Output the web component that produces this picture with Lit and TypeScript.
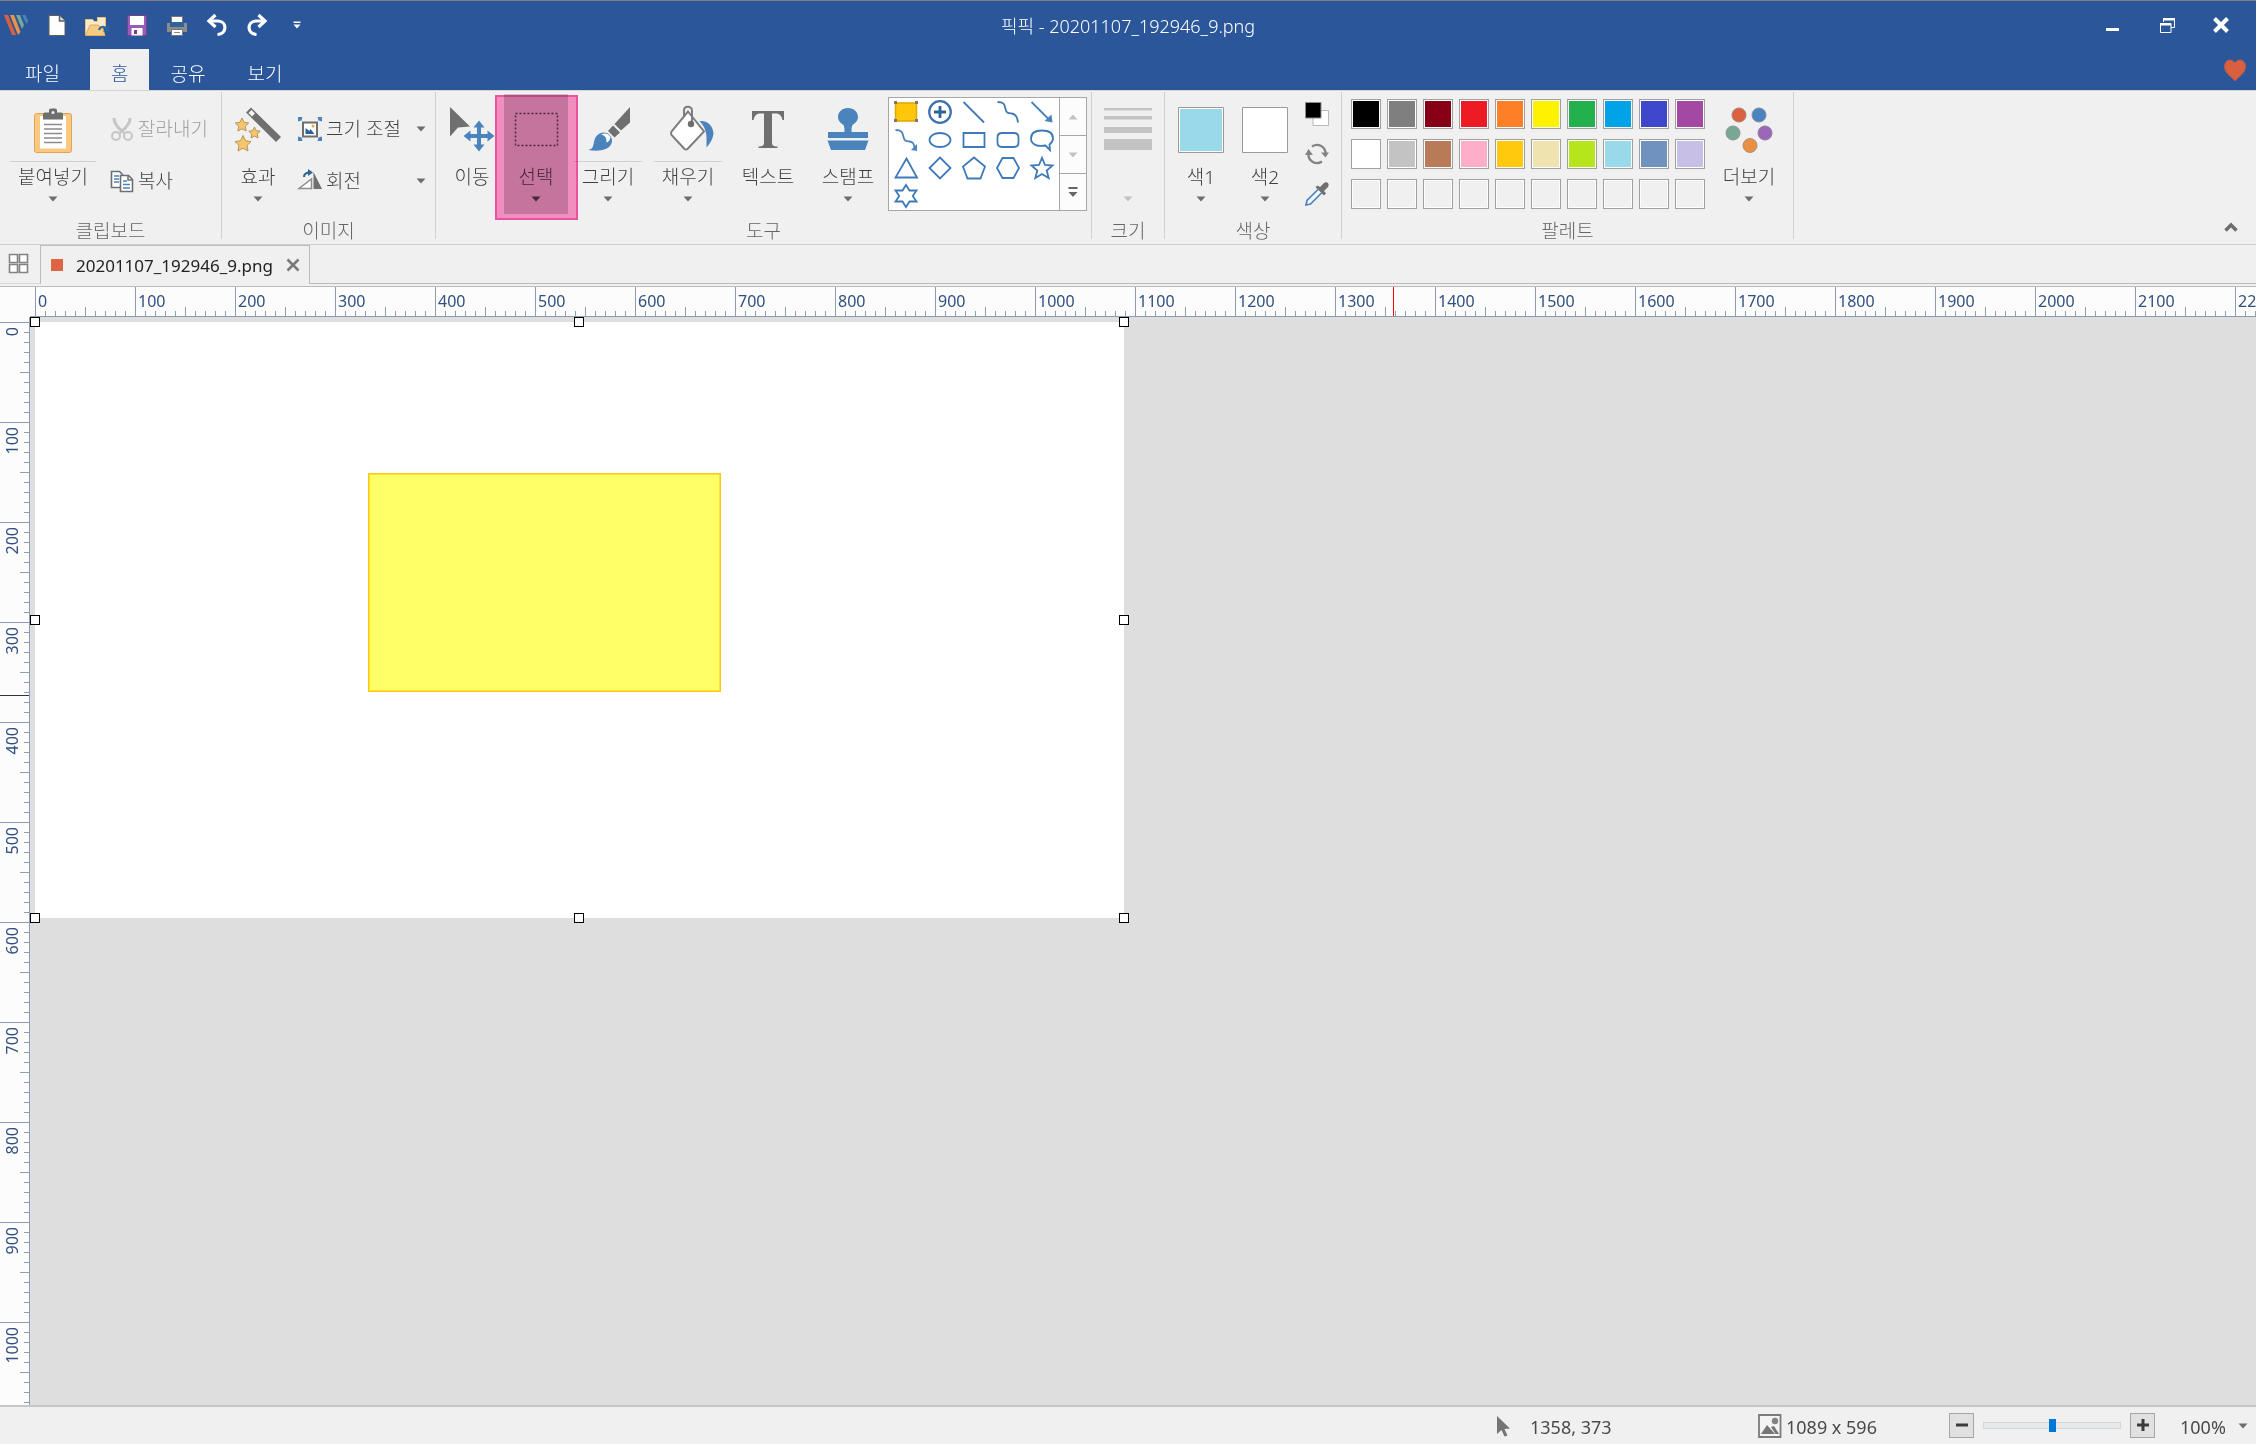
import { LitElement, html, svg, css, nothing } from "lit";
import type { TemplateResult } from "lit";
import { customElement, property, state } from "lit/decorators.js";
import { classMap } from "lit/directives/class-map.js";
import { styleMap } from "lit/directives/style-map.js";

const box = (w: number, h: number, body: unknown): TemplateResult =>
  html`<svg width=${w} height=${h} viewBox="0 0 ${w} ${h}" fill="none" aria-hidden="true">${body}</svg>`;

const BLUE = "#4b83bd";
const GREY = "#6f6f6f";

const caret = (color = "#6d6d6d") => box(10, 6, svg`<path d="M0.5 0.5h9l-4.5 5z" fill=${color}/>`);

/* ---------- quick access icons ---------- */
const icons = {
  logo: box(26, 24, svg`
    <path d="M1 2h4l8 20h-4z" fill="#d9603f"/>
    <path d="M7 2h4l6.500 17-2.500 3z" fill="#e8924a"/>
    <path d="M13 2h4l4 10-2 4z" fill="#79a795"/>
    <path d="M19 2h3.500l2.500 6-1.500 3z" fill="#4b83bd"/>`),
  newFile: box(24, 24, svg`
    <path d="M4 2.500h10.500l5.500 5.500v14.500h-16z" fill="#fff" stroke="#5f5f5f"/>
    <path d="M14.500 2.500v5.500h5.500" fill="#ddd" stroke="#5f5f5f" stroke-width="1.500"/>`),
  open: box(26, 24, svg`
    <path d="M1.500 22v-15.500h7l2 2h3v-4h8v10" fill="#fbe9c8" stroke="#e8c078"/>
    <path d="M1.500 22.500l4.500-10.500h8l5 4 2 6.500z" fill="#f3cc86" stroke="#e0ae5c"/>
    <path d="M15 17c1-4 6-4 7.500-1" stroke="#2d6499" stroke-width="2"/>
    <path d="M25 12.500v6h-6z" fill="#2d6499"/>`),
  save: box(24, 24, svg`
    <path d="M2.500 2.500h19v20h-19z" fill="#9a5cb8" stroke="#74418f"/>
    <path d="M5 3h14v9h-14z" fill="#fff"/>
    <path d="M6.500 15h11v7.500h-11z" fill="#fff"/>
    <path d="M9 17h3v4h-3z" fill="#74418f"/>`),
  print: box(24, 24, svg`
    <path d="M6.500 3.500h11v8h-11z" fill="#fff" stroke="#777"/>
    <path d="M2 10h3v4h14v-4h3v9h-20z" fill="#8c8c8c"/>
    <path d="M5 9h14v5h-14z" fill="#2d6499"/>
    <path d="M6.500 16.500h11v6h-11z" fill="#fff" stroke="#777"/>
    <path d="M9 19.500h6" stroke="#888"/>`),
  undo: box(24, 24, svg`
    <path d="M4 8h9.500c9 1 8.500 13 -1 13.500" stroke="#fff" stroke-width="3.200"/>
    <path d="M10.500 2l-6.500 6 6.500 6" stroke="#fff" stroke-width="3.200"/>`),
  redo: box(24, 24, svg`
    <path d="M20 8h-9.500c-9 1-8.500 13 1 13.500" stroke="#fff" stroke-width="3.200"/>
    <path d="M13.500 2l6.500 6-6.500 6" stroke="#fff" stroke-width="3.200"/>`),
  quickMore: box(8, 8, svg`<path d="M0.500 0.500h7v1.500h-7zM0.500 3.500h7l-3.500 4z" fill="#fff"/>`),
  minimize: box(16, 16, svg`<path d="M1 11h13v3h-13z" fill="#fff"/>`),
  restore: box(16, 16, svg`
    <path d="M4.500 5v-3.500h11v9h-3.500" stroke="#fff"/><path d="M4 1h12v2.500h-12z" fill="#fff"/>
    <path d="M1.500 6.500h10.500v9h-10.500z" stroke="#fff"/><path d="M1 6h11v2.500h-11z" fill="#fff"/>`),
  close: box(16, 16, svg`<path d="M1.500 1.500l13 13M14.500 1.500l-13 13" stroke="#fff" stroke-width="4"/>`),
  heart: box(24, 24, svg`<path d="M12 23c-3-4-10.500-7.500-10.500-14.500 0-7 7.500-8.500 10.500-3.500 3-5 10.500-3.500 10.500 3.500 0 7-7.500 10.500-10.500 14.500z" fill="#d9603f" stroke="#b35a4a"/>`),
  collapse: box(14, 10, svg`<path d="M1.500 8.500l5.500-5.500 5.500 5.500" stroke="#6d6d6d" stroke-width="3.500"/>`),

  /* ---------- ribbon icons ---------- */
  paste: box(48, 48, svg`
    <rect x="5.500" y="7.500" width="37" height="39" rx="2" fill="#f9c983" stroke="#e3a44f"/>
    <path d="M11 10h26v32.500h-26z" fill="#fff"/>
    <path d="M14 12v-4q0-1.500 2-1.500h4v-2.500q0-1.500 2-1.500h4q2 0 2 1.500v2.500h4q2 0 2 1.500v5.500h-20z" fill="#6f6f6f"/>
    <circle cx="24" cy="6.500" r="1.500" fill="#f0f0f0"/>
    <path d="M15 18.500h18M15 23h18M15 27.500h18M15 32h18M15 36.500h18" stroke="#8c8c8c" stroke-width="1.600"/>`),
  cut: box(24, 24, svg`
    <path d="M4 1c0 5 3 9 8 13M20 1c0 5-3 9-8 13" stroke="#c6c6c6" stroke-width="3"/>
    <path d="M10 12l5 5M14 12l-5 5" stroke="#c6c6c6" stroke-width="2"/>
    <circle cx="6" cy="19" r="4" stroke="#c6c6c6" stroke-width="2"/>
    <circle cx="18" cy="19" r="4" stroke="#c6c6c6" stroke-width="2"/>`),
  copy: box(24, 24, svg`
    <path d="M1.500 2.500h8l3 3v13h-11z" fill="#fff" stroke="${GREY}" stroke-width="1.600"/>
    <path d="M4 7h5M4 10h5M4 13h5" stroke="${BLUE}" stroke-width="1.500"/>
    <path d="M10.500 6.500h8l4 4v12h-12z" fill="#fff" stroke="${GREY}" stroke-width="1.600"/>
    <path d="M18 6.500v4.500h4.500" stroke="${GREY}" stroke-width="1.500"/>
    <path d="M13 12h4M13 15.500h7M13 19h7" stroke="${BLUE}" stroke-width="1.500"/>`),
  effects: box(48, 48, svg`
    <path d="M12 6.500l5-5 30 29.500-5 5z" fill="${GREY}"/>
    <path d="M14.500 7l3-3 3.500 3.500-3 3z" fill="#f4f4f4"/>
    <path d="M8 12l2 4.300 4.700.7-3.400 3.300.8 4.700-4.100-2.200-4.100 2.200.8-4.700-3.400-3.300 4.700-.7z" fill="#f5c66e" stroke="#b89455"/>
    <path d="M20.500 21l1.700 3.700 4 .5-3 2.800.8 4-3.500-2-3.500 2 .8-4-3-2.800 4-.5z" fill="#f5c66e" stroke="#b89455"/>
    <path d="M9 29.500l2.500 5.300 5.500.7-4 3.900 1 5.600-5-2.800-5 2.800 1-5.600-4-3.900 5.500-.7z" fill="#f5c66e" stroke="#b89455"/>`),
  resize: box(24, 24, svg`
    <path d="M5 5.500h14v14h-14z" fill="#fff" stroke="${GREY}" stroke-width="2"/>
    <path d="M7.500 17v-6l4 3 1-2 4 5z" fill="#2d6499"/><circle cx="15" cy="9" r="1.500" fill="#f0a44a"/>
    <path d="M0 0h4.500l-1 3.500-3.500 1zM24 0h-4.500l1 3.500 3.500 1zM0 24h4.500l-1-3.500-3.500-1zM24 24h-4.500l1-3.500 3.500-1z" fill="${BLUE}"/>`),
  rotate: box(24, 24, svg`
    <path d="M1 19.500l12.500-9.500v9.500z" fill="#fff" stroke="#8c8c8c" stroke-width="1.500"/>
    <path d="M15.500 3l8.500 17h-8.500z" fill="${GREY}"/>
    <path d="M6 8c0-4 3-4.500 6-4.500" stroke="#2d6499" stroke-width="2"/>
    <path d="M10 0l5 3.500-5 3.500z" fill="#2d6499"/>`),
  move: box(48, 48, svg`
    <path d="M2 1l20 19.500-12 1-8 9z" fill="${GREY}"/>
    <path d="M31 14.500l5.500 7h-3.500v6.500h6.500v-3.500l7 5.500-7 5.500v-3.500h-6.500v6.500h3.500l-5.500 7-5.500-7h3.500v-6.500h-6.500v3.500l-7-5.500 7-5.500v3.500h6.500v-6.500h-3.500z" fill="${BLUE}"/>`),
  select: box(48, 48, svg`<path d="M3.500 7.500h42v32h-42z" stroke="#4a4550" stroke-width="1.500" stroke-dasharray="2 2"/>`),
  draw: box(48, 48, svg`
    <path d="M46 1v15.500l-9 8-6.500-6.500z" fill="${GREY}"/>
    <path d="M29 19.500l7 7-5.500 5-6.500-6.500z" fill="${GREY}"/>
    <path d="M4 44c6-1 5-5 6.500-10 2-7.500 11-9.500 15-5 5 5 2 12-4 14-5 2-11 2-17.500 1z" fill="${BLUE}"/>
    <path d="M17 28.500c4-2 8-.5 9.500 3-.5 3-2.500 4.500-4 5 .5-4-1.500-7.500-5.500-8z" fill="#fff"/>`),
  fill: box(48, 48, svg`
    <path d="M24 5.500l16 20-16.500 17.500q-1.500 1-3 0l-13-14q-1-2 0-3.500z" fill="#fff" stroke="#7d7d7d" stroke-width="2"/>
    <path d="M28 17.500v-13c-.5-5-8-5-8 0v6" stroke="#7d7d7d" stroke-width="2"/>
    <circle cx="27" cy="18" r="3.200" fill="${GREY}"/>
    <path d="M35.500 15c8-1 14 5 14 13-1 6-4 10-7 13.500 0-9 1.500-18-7-26.500z" fill="${BLUE}"/>`),
  text: box(48, 48, svg`<path d="M8 5h32v9h-1.500c-1-4-2.500-6.500-7-6.500h-3.500v29c0 3 1.500 4 5.500 4v1.500h-19v-1.500c4 0 5.500-1 5.500-4v-29h-3.500c-4.500 0-6 2.500-7 6.500h-1.500z" fill="${GREY}"/>`),
  stamp: box(48, 48, svg`
    <path d="M24 2c6 0 10 4 10 9 0 4-3 6-5.500 8-1 2-1 4-1 7h16.500v6h-40v-6h16.500c0-3 0-5-1-7-2.500-2-5.500-4-5.500-8 0-5 4-9 10-9z" fill="${BLUE}"/>
    <path d="M3.500 34.500h41l-3.500 9.500h-34z" fill="${BLUE}"/>`),
  sizes: box(48, 48, svg`<path d="M0 2h48v2.500h-48zM0 10h48v3.500h-48zM0 21h48v6h-48zM0 33h48v11h-48z" fill="#c3c3c3"/>`),
  defaults: box(24, 24, svg`
    <path d="M8 8.500h15.500v15h-15.500z" fill="#fff" stroke="#bbb"/>
    <path d="M0.500 0.500h15.500v15.500h-15.500z" fill="#000" stroke="#8c8c8c"/>`),
  swap: box(24, 24, svg`
    <path d="M7 4.500c6-4 14 0 13.500 8M17 19.500c-6 4-14 0-13.500-8" stroke="#838383" stroke-width="2.300"/>
    <path d="M16 10.500h8l-3.500 5zM0 13h8l-4.500-6z" fill="#838383"/>`),
  picker: box(24, 24, svg`
    <path d="M13 7.500l-11 11-1 4.500 4.500-1 11-11" fill="#f4f8fc" stroke="${BLUE}" stroke-width="1.700"/>
    <path d="M10.500 5l2-1.500 2.500 1.500 4-4c3-2 6 1 4 4l-4 4 2 2.500-2 2z" fill="${GREY}"/>`),
  more: box(48, 48, svg`
    <circle cx="14" cy="9" r="7" fill="#dc6140" stroke="#a98076"/>
    <circle cx="34" cy="9" r="7" fill="${BLUE}" stroke="#7b8ea3"/>
    <circle cx="8" cy="27" r="7" fill="#79a795" stroke="#849b93"/>
    <circle cx="40" cy="27" r="7" fill="#9a67b9" stroke="#8f7e9b"/>
    <circle cx="25" cy="39.500" r="7" fill="#ea9045" stroke="#ab9078"/>`),

  /* ---------- document bar and status bar ---------- */
  grid: box(22, 22, svg`<path d="M1.500 1.500h8v8h-8zM11.500 1.500h8v8h-8zM1.500 11.500h8v8h-8zM11.500 11.500h8v8h-8z" fill="#fff" stroke="#838383" stroke-width="1.600"/>`),
  tabClose: box(14, 12, svg`<path d="M1.500 .5l11 11M12.500 .5l-11 11" stroke="#7a7a7a" stroke-width="2.600"/>`),
  pointer: box(16, 22, svg`<path d="M1 1l13 12.500-5.500.5 3 6.500-3 1-3-6.500-4.500 4z" fill="#757575"/>`),
  image: box(24, 24, svg`
    <path d="M1 1h21.500v22h-21.500z" fill="#f4f4f4" stroke="#7b7b7b" stroke-width="1.800"/>
    <path d="M3 20l6-9 8 9zM13 13l3-1 5 8h-3.500z" fill="#757575"/><circle cx="17" cy="7" r="3.200" fill="#838383"/>`),
  minus: box(14, 14, svg`<path d="M1 4.500h12v3h-12z" fill="#3c3c3c"/>`),
  plus: box(14, 14, svg`<path d="M1 4.500h12v3h-12zM5.500 0h3v12h-3z" fill="#3c3c3c"/>`),
};

/* ---------- shape gallery ---------- */
const shape = (d: string) => box(24, 24, svg`<path d=${d} stroke="#3f7ab8" stroke-width="1.800" fill="none"/>`);

const SHAPES: { name: string; icon: TemplateResult }[] = [
  {
    name: "선택 영역",
    icon: box(24, 24, svg`
      <path d="M1.500 3h21v18h-21z" fill="#ffc60a" stroke="#e0a800" stroke-width="1.500"/>
      <path d="M0 1h3v3h-3zM21 1h3v3h-3zM0 19h3v3h-3zM21 19h3v3h-3z" fill="#777"/>`),
  },
  {
    name: "번호",
    icon: box(24, 24, svg`<circle cx="12" cy="12" r="10.800" stroke="#3d72ad" stroke-width="2.200"/>
      <path d="M6 12h12M12 6v12" stroke="#2d6499" stroke-width="2.800"/>`),
  },
  { name: "선", icon: shape("M1.500 2L22 22.500") },
  { name: "곡선", icon: shape("M1.500 2c7 0 7 3 8 7s2 4 6 4.500 6 3 6.500 9") },
  {
    name: "화살표",
    icon: box(24, 24, svg`<path d="M1.500 2l18 18" stroke="#4b83bd" stroke-width="1.800"/><path d="M22.500 22.500l-1-8-7 6.500z" fill="#4b83bd"/>`),
  },
  {
    name: "곡선 화살표",
    icon: box(24, 24, svg`<path d="M1.500 2c7 0 7 3 8 7s2 4 6 4.500 4 2 5 6" stroke="#4b83bd" stroke-width="1.800"/><path d="M23 23v-7l-6 6z" fill="#4b83bd"/>`),
  },
  { name: "타원", icon: shape("M1.500 12a10.500 7 0 0 1 21 0a10.500 7 0 0 1-21 0z") },
  { name: "직사각형", icon: shape("M1.500 5h21v14h-21z") },
  { name: "둥근 직사각형", icon: shape("M6 5h12q4.500 0 4.500 4.500v5q0 4.500-4.500 4.500h-12q-4.500 0-4.500-4.500v-5q0-4.500 4.500-4.500z") },
  { name: "말풍선", icon: shape("M20 22l-4.500-4.500c-8 1.500-14.500-1-14.500-7 0-5 4-8 11-8s11 3 11 8c0 3-1.500 4.500-3.500 6z") },
  { name: "삼각형", icon: shape("M12.500 2.500l10.500 19h-21.500z") },
  { name: "마름모", icon: shape("M12 1.500l10.500 10.500-10.500 10.500-10.500-10.500z") },
  { name: "오각형", icon: shape("M12 1.500l11 9-4.500 12h-13l-4.500-12z") },
  { name: "육각형", icon: shape("M6.500 2h11l5.500 10-5.500 10h-11l-5.500-10z") },
  { name: "별", icon: shape("M12 1.800l3 7.200 7.500.5-5.800 5 2 7.500-6.700-4-6.700 4 2-7.500-5.800-5 7.500-.5z") },
  { name: "육각별", icon: shape("M12 1l3.500 5.500h7l-3.700 5.500 3.700 5.500h-7l-3.500 5.500-3.500-5.500h-7l3.700-5.500-3.700-5.500h7z") },
];

const PALETTE: string[] = [
  "#000000", "#7f7f7f", "#880015", "#ed1c24", "#ff7f27", "#fff200", "#22b14c", "#00a2e8", "#3f48cc", "#a349a4",
  "#ffffff", "#c3c3c3", "#b97a57", "#ffaec9", "#ffc90e", "#efe4b0", "#b5e61d", "#99d9ea", "#7092be", "#c8bfe7",
  ...Array<string>(10).fill("#f0f0f0"),
];

const controls = css`
  button {
    appearance: none;
    border: 0;
    margin: 0;
    padding: 0;
    background: none;
    color: inherit;
    font: inherit;
    cursor: default;
  }
  svg {
    display: block;
    overflow: visible;
  }
`;

/** Large ribbon button: icon over a caption, with an optional menu caret. */
@customElement("ribbon-button")
export class RibbonButton extends LitElement {
  @property() label = "";
  @property({ attribute: false }) icon: unknown = nothing;
  @property({ type: Boolean }) split = false;
  @property({ type: Boolean }) menu = false;
  @property({ type: Boolean, reflect: true }) active = false;
  @property({ type: Boolean }) disabled = false;

  static styles = [
    controls,
    css`
      :host {
        display: block;
      }
      .button {
        display: grid;
        grid-template-rows: 67px 1px 32px 10px;
        justify-items: center;
        align-content: start;
        width: 100%;
        height: 120px;
        white-space: nowrap;
      }
      .icon {
        align-self: center;
        padding-top: 4px;
      }
      .rule {
        justify-self: stretch;
      }
      .split .rule {
        background: #d0d0d0;
      }
      .caption {
        line-height: 30px;
      }
      .caret {
        align-self: center;
      }
      .active {
        background: #c5c5c5;
      }
    `,
  ];

  render() {
    return html`<button
      type="button"
      class=${classMap({ button: true, split: this.split, active: this.active })}
      ?disabled=${this.disabled}
      aria-label=${this.label}
      aria-haspopup=${this.menu ? "menu" : "false"}
    >
      <span class="icon">${this.icon}</span>
      <span class="rule"></span>
      <span class="caption">${this.disabled ? nothing : this.label}</span>
      <span class="caret">${this.menu ? caret(this.disabled ? "#c3c3c3" : this.active ? "#444" : undefined) : nothing}</span>
    </button>`;
  }
}

/** Titled section of the ribbon. */
@customElement("ribbon-group")
export class RibbonGroup extends LitElement {
  @property() label = "";

  static styles = css`
    :host {
      display: grid;
      grid-template-rows: 120px 25px;
      margin: 1px 0 5px;
      padding-top: 2px;
      border-right: 1px solid #d0d0d0;
    }
    .body {
      display: flex;
    }
    .label {
      margin: 0;
      padding-top: 2px;
      font: inherit;
      line-height: 30px;
      text-align: center;
      color: #666;
    }
  `;

  render() {
    return html`<div class="body"><slot></slot></div>
      <h2 class="label">${this.label}</h2>`;
  }
}

/** Pixel ruler along one edge of the canvas. */
@customElement("pixel-ruler")
export class PixelRuler extends LitElement {
  @property({ reflect: true }) axis: "x" | "y" = "x";
  @property({ type: Number }) marker = 0;
  @state() private length = 0;

  private observer = new ResizeObserver(() => this.measure());

  connectedCallback() {
    super.connectedCallback();
    this.observer.observe(this);
  }

  disconnectedCallback() {
    this.observer.disconnect();
    super.disconnectedCallback();
  }

  private measure() {
    this.length = this.axis === "x" ? this.clientWidth : this.clientHeight;
  }

  static styles = css`
    :host {
      --tick: #8d9bb3;
      display: flex;
      position: relative;
      box-sizing: border-box;
      overflow: hidden;
      background-color: #fcfcfc;
      color: #31507f;
      font-size: 16px;
      line-height: 20px;
    }
    :host([axis="x"]) {
      padding-left: 5px;
      border-bottom: 1px solid var(--tick);
      background-image: linear-gradient(90deg, var(--tick) 1px, transparent 1px),
        linear-gradient(90deg, var(--tick) 1px, transparent 1px), linear-gradient(90deg, var(--tick) 1px, transparent 1px);
      background-size: 100px 100%, 50px 9px, 10px 5px;
      background-position: 5px 100%;
      background-repeat: repeat-x;
    }
    :host([axis="y"]) {
      flex-direction: column;
      padding-top: 5px;
      border-right: 1px solid var(--tick);
      background-image: linear-gradient(var(--tick) 1px, transparent 1px),
        linear-gradient(var(--tick) 1px, transparent 1px), linear-gradient(var(--tick) 1px, transparent 1px);
      background-size: 100% 100px, 9px 50px, 5px 10px;
      background-position: 100% 5px;
      background-repeat: repeat-y;
    }
    .step {
      flex: none;
      box-sizing: border-box;
    }
    :host([axis="x"]) .step {
      width: 100px;
      padding: 4px 0 0 3px;
    }
    :host([axis="y"]) .step {
      height: 100px;
      padding: 5px 0 0 2px;
    }
    :host([axis="y"]) .value {
      display: block;
      writing-mode: vertical-rl;
      rotate: 180deg;
    }
    .marker {
      position: absolute;
      background: #ff0000;
    }
    :host([axis="x"]) .marker {
      top: 0;
      bottom: 0;
      width: 1px;
    }
    :host([axis="y"]) .marker {
      left: 0;
      right: 0;
      height: 1px;
      background: #333;
    }
  `;

  render() {
    const count = Math.max(0, Math.ceil((this.length - 5) / 100));
    const steps = Array.from({ length: count }, (_, i) => i * 100);
    const offset = `${this.marker + 5}px`;
    return html`${steps.map((n) => html`<div class="step"><span class="value">${n}</span></div>`)}
      <div class="marker" style=${styleMap(this.axis === "x" ? { left: offset } : { top: offset })}></div>`;
  }
}

@customElement("app-root")
export class AppRoot extends LitElement {
  @state() private fileName = "20201107_192946_9.png";
  @state() private page = { width: 1089, height: 596 };
  @state() private pointer = { x: 1358, y: 373 };
  @state() private shapeBox = { left: 333, top: 151, width: 353, height: 219 };

  static styles = [
    controls,
    css`
      :host {
        display: grid;
        grid-template-rows: auto auto auto minmax(0, 1fr) auto;
        height: 100vh;
        overflow: hidden;
        background: #f0f0f0;
        color: #3f3f3f;
        font-family: "Noto Sans", "Noto Sans CJK KR", sans-serif;
        font-size: 18px;
        line-height: 24px;
      }

      /* title bar */
      .header {
        border-top: 1px solid #7f7f7f;
        background: #2b579a;
        color: #fff;
      }
      .titlebar {
        display: grid;
        grid-template-columns: 1fr auto 1fr;
        align-items: center;
        height: 48px;
      }
      .quick,
      .window {
        display: flex;
        align-items: center;
      }
      .logo {
        width: 34px;
        padding-left: 3px;
      }
      .quick button,
      .window button {
        display: grid;
        place-items: center;
        width: 40px;
        height: 40px;
      }
      .window {
        justify-content: end;
        padding-right: 8px;
      }
      .window button {
        width: 54px;
      }
      .title {
        margin: 0;
        padding-top: 2px;
        font-size: 18px;
        font-weight: 300;
        color: #fff;
      }
      .menubar {
        display: flex;
        height: 41px;
      }
      .menu {
        box-sizing: border-box;
        padding: 6px 21px 0;
        font-family: "Noto Sans CJK KR", sans-serif;
        font-size: 19px;
        font-weight: 300;
      }
      .menu.file {
        margin-right: 5px;
        padding: 6px 25px 0;
      }
      .menu.current {
        background: #f0f0f0;
        color: #2b579a;
      }
      .favorite {
        margin: 0 9px 0 auto;
      }

      /* ribbon */
      .ribbon {
        display: flex;
        border-top: 1px solid #d4d4d4;
        border-bottom: 1px solid #d0d0d0;
        font-size: 19px;
        font-weight: 300;
      }
      .collapse {
        margin-left: auto;
        align-self: end;
        padding: 12px 18px;
      }
      .w50 { width: 50px; }
      .w64 { width: 64px; }
      .w68 { width: 68px; margin: 0 6px; }
      .w80 { width: 80px; }
      .w86 { width: 86px; }
      .clipboard { width: 221px; }
      .image { width: 213px; }
      .size { width: 72px; }
      .colors { width: 176px; }
      .clipboard .w86 { margin-left: 10px; }
      .image .w50 { margin-left: 11px; }
      .tools > :first-child { margin-left: 4px; }
      .colors > :first-child { margin-left: 4px; }
      .gallery,
      .palette .w80 {
        margin-right: 4px;
      }
      .size ribbon-button { width: 72px; }
      .rows {
        display: grid;
        grid-template-rows: 52px 52px;
        flex: 1;
        padding-top: 9px;
      }
      .clipboard .rows { padding-left: 14px; }
      .image .rows { padding-left: 15px; padding-right: 9px; }
      .small {
        display: grid;
        grid-template-columns: 24px 1fr auto;
        align-items: center;
        gap: 4px;
        text-align: left;
        white-space: nowrap;
      }
      .small:disabled {
        color: #a0a0a0;
      }
      .selected {
        position: relative;
      }
      .highlight {
        position: absolute;
        top: 1px;
        left: -9px;
        box-sizing: border-box;
        width: 83px;
        height: 125px;
        border: 2px solid #f959a8;
        background: #ff98cb;
        mix-blend-mode: multiply;
        pointer-events: none;
      }
      .gallery {
        display: flex;
        box-sizing: border-box;
        height: 114px;
        margin-top: 3px;
        border: 1px solid #a6a6a6;
        background: #fff;
      }
      .shapes {
        display: grid;
        grid-template-columns: repeat(5, 34px);
        grid-template-rows: repeat(4, 28px);
      }
      .shapes button,
      .scroll button,
      .stack button {
        display: grid;
        place-items: center;
      }
      .scroll {
        display: grid;
        grid-template-rows: 37px 38px 37px;
        width: 27px;
      }
      .scroll button {
        border-left: 1px solid #a6a6a6;
        background: #fcfcfc;
      }
      .scroll button + button {
        border-top: 1px solid #a6a6a6;
      }
      .stack {
        display: grid;
        grid-template-rows: repeat(3, 40px);
        width: 40px;
      }
      .swatches {
        display: grid;
        grid-template-columns: repeat(10, 30px);
        grid-template-rows: repeat(3, 30px);
        gap: 10px 6px;
        padding: 5px 4px 0 9px;
      }
      .swatch {
        border: 1px solid #a0a0a0;
        box-shadow: inset 0 0 0 1px #fff;
      }

      /* document tabs */
      .documents {
        display: flex;
        height: 41px;
        border-bottom: 1px solid #bbb;
      }
      .overview {
        box-sizing: border-box;
        width: 40px;
        height: 39px;
        padding: 0 0 0 8px;
        border-bottom: 1px solid #d8d8d8;
      }
      .document {
        display: flex;
        align-items: center;
        gap: 13px;
        height: 38px;
        padding: 0 9px 0 10px;
        border: 1px solid #bbb;
        border-bottom: 0;
        color: #222;
        font-size: 17px;
        white-space: nowrap;
      }
      .name {
        padding-top: 2px;
      }
      .modified {
        width: 12px;
        height: 12px;
        background: #dd6444;
      }
      .filler {
        flex: 1;
        height: 38px;
        border-bottom: 1px solid #bbb;
      }

      /* canvas */
      .workspace {
        display: grid;
        grid-template-columns: 30px minmax(0, 1fr);
        grid-template-rows: 30px minmax(0, 1fr);
        background: #dedede;
      }
      .corner {
        background: #fcfcfc;
      }
      .canvas {
        padding: 5px;
      }
      .page {
        position: relative;
        background: #fff;
      }
      .handle {
        position: absolute;
        box-sizing: border-box;
        width: 10px;
        height: 10px;
        margin: -5px;
        border: 1px solid #000;
        background: #fff;
      }
      .drawn {
        position: absolute;
        box-sizing: border-box;
        border: 1px solid #ffc80e;
        box-shadow: inset 0 0 0 1px #ffe238;
        background: #ffff66;
      }

      /* status bar */
      .status {
        display: flex;
        align-items: center;
        justify-content: end;
        height: 37px;
        padding-right: 8px;
        border-top: 2px solid #c6c6c6;
        color: #4a4a4a;
      }
      .field {
        display: flex;
        align-items: center;
        box-sizing: border-box;
      }
      .field span,
      .percent select {
        padding: 2px 0 0;
      }
      .field.pointer {
        gap: 18px;
        width: 262px;
      }
      .field.dimensions {
        gap: 4px;
        width: 191px;
      }
      .step {
        display: grid;
        place-items: center;
        box-sizing: border-box;
        width: 25px;
        height: 25px;
        border: 1px solid #a6a6a6;
        background: #e1e1e1;
      }
      .zoom {
        appearance: none;
        width: 138px;
        height: 13px;
        margin: 0 9px;
        background: linear-gradient(#e7eaea, #e7eaea) center / 136px 5px no-repeat,
          linear-gradient(#d3d6d6, #d3d6d6) center / 138px 7px no-repeat;
      }
      .zoom::-webkit-slider-thumb {
        appearance: none;
        width: 7px;
        height: 13px;
        background: #0078d7;
      }
      .percent {
        display: flex;
        align-items: center;
        width: 93px;
        padding-left: 25px;
        box-sizing: border-box;
      }
      .percent select {
        appearance: none;
        flex: 1;
        min-width: 0;
        border: 0;
        background: none;
        color: inherit;
        font: inherit;
      }
    `,
  ];

  private renderHeader() {
    const quick: [string, TemplateResult][] = [
      ["새로 만들기", icons.newFile],
      ["열기", icons.open],
      ["저장", icons.save],
      ["인쇄", icons.print],
      ["실행 취소", icons.undo],
      ["다시 실행", icons.redo],
      ["빠른 실행 도구 모음", icons.quickMore],
    ];
    const windowButtons: [string, TemplateResult][] = [
      ["최소화", icons.minimize],
      ["이전 크기로", icons.restore],
      ["닫기", icons.close],
    ];
    const button = ([name, icon]: [string, TemplateResult]) =>
      html`<button type="button" aria-label=${name}>${icon}</button>`;
    return html`<header class="header">
      <div class="titlebar">
        <div class="quick"><span class="logo">${icons.logo}</span>${quick.map(button)}</div>
        <h1 class="title">픽픽 - ${this.fileName}</h1>
        <div class="window">${windowButtons.map(button)}</div>
      </div>
      <nav class="menubar">
        <button type="button" class="menu file">파일</button>
        <button type="button" class="menu current">홈</button>
        <button type="button" class="menu">공유</button>
        <button type="button" class="menu">보기</button>
        <button type="button" class="favorite" aria-label="후원">${icons.heart}</button>
      </nav>
    </header>`;
  }

  private renderRibbon() {
    return html`<section class="ribbon">
      <ribbon-group class="clipboard" label="클립보드">
        <ribbon-button class="w86" label="붙여넣기" .icon=${icons.paste} split menu></ribbon-button>
        <div class="rows">
          <button type="button" class="small" disabled>${icons.cut}<span>잘라내기</span></button>
          <button type="button" class="small">${icons.copy}<span>복사</span></button>
        </div>
      </ribbon-group>

      <ribbon-group class="image" label="이미지">
        <ribbon-button class="w50" label="효과" .icon=${icons.effects} menu></ribbon-button>
        <div class="rows">
          <button type="button" class="small" aria-haspopup="menu">${icons.resize}<span>크기 조절</span>${caret()}</button>
          <button type="button" class="small" aria-haspopup="menu">${icons.rotate}<span>회전</span>${caret()}</button>
        </div>
      </ribbon-group>

      <ribbon-group class="tools" label="도구">
        <ribbon-button class="w64" label="이동" .icon=${icons.move}></ribbon-button>
        <div class="selected w64">
          <ribbon-button label="선택" .icon=${icons.select} menu active></ribbon-button>
          <div class="highlight"></div>
        </div>
        <ribbon-button class="w68" label="그리기" .icon=${icons.draw} split menu></ribbon-button>
        <ribbon-button class="w68" label="채우기" .icon=${icons.fill} split menu></ribbon-button>
        <ribbon-button class="w80" label="텍스트" .icon=${icons.text}></ribbon-button>
        <ribbon-button class="w80" label="스탬프" .icon=${icons.stamp} menu></ribbon-button>
        <div class="gallery">
          <div class="shapes">
            ${SHAPES.map((s) => html`<button type="button" aria-label=${s.name}>${s.icon}</button>`)}
          </div>
          <div class="scroll">
            <button type="button" aria-label="위로">${box(10, 6, svg`<path d="M.5 5.500h9l-4.500-5z" fill="#c3c3c3"/>`)}</button>
            <button type="button" aria-label="아래로">${caret("#c3c3c3")}</button>
            <button type="button" aria-label="모든 도형">
              ${box(10, 10, svg`<path d="M.5 0h9v2h-9zM.5 5h9l-4.500 5z" fill="#666"/>`)}
            </button>
          </div>
        </div>
      </ribbon-group>

      <ribbon-group class="size" label="크기">
        <ribbon-button label="크기" .icon=${icons.sizes} menu disabled></ribbon-button>
      </ribbon-group>

      <ribbon-group class="colors" label="색상">
        <ribbon-button
          class="w64"
          label="색1"
          menu
          .icon=${box(46, 46, svg`<path d="M.5 .5h45v45h-45z" fill="#fff" stroke="#9a9a9a"/><path d="M2 2h42v42h-42z" fill="#99d9ea"/>`)}
        ></ribbon-button>
        <ribbon-button
          class="w64"
          label="색2"
          menu
          .icon=${box(46, 46, svg`<path d="M.5 .5h45v45h-45z" fill="#fff" stroke="#9a9a9a"/>`)}
        ></ribbon-button>
        <div class="stack">
          <button type="button" aria-label="기본 색상">${icons.defaults}</button>
          <button type="button" aria-label="색상 바꾸기">${icons.swap}</button>
          <button type="button" aria-label="색상 추출">${icons.picker}</button>
        </div>
      </ribbon-group>

      <ribbon-group class="palette" label="팔레트">
        <div class="swatches">
          ${PALETTE.map(
            (color) =>
              html`<button type="button" class="swatch" aria-label=${color} style=${styleMap({ backgroundColor: color })}></button>`,
          )}
        </div>
        <ribbon-button class="w80" label="더보기" .icon=${icons.more} menu></ribbon-button>
      </ribbon-group>

      <button type="button" class="collapse" aria-label="리본 메뉴 축소">${icons.collapse}</button>
    </section>`;
  }

  private renderWorkspace() {
    const { width, height } = this.page;
    const xs = [0, Math.floor(width / 2), width];
    const ys = [0, Math.floor(height / 2), height];
    const handles = ys.flatMap((top, row) => xs.filter((_, col) => row !== 1 || col !== 1).map((left) => ({ left, top })));
    const px = (o: Record<string, number>) =>
      styleMap(Object.fromEntries(Object.entries(o).map(([key, value]) => [key, `${value}px`])));
    return html`<main class="workspace">
      <div class="corner"></div>
      <pixel-ruler axis="x" .marker=${this.pointer.x}></pixel-ruler>
      <pixel-ruler axis="y" .marker=${this.pointer.y}></pixel-ruler>
      <div class="canvas">
        <div class="page" style=${px({ width, height })}>
          <div class="drawn" style=${px(this.shapeBox)}></div>
          ${handles.map((h) => html`<div class="handle" style=${px(h)}></div>`)}
        </div>
      </div>
    </main>`;
  }

  private renderStatus() {
    return html`<footer class="status">
      <div class="field pointer">${icons.pointer}<span>${this.pointer.x}, ${this.pointer.y}</span></div>
      <div class="field dimensions">${icons.image}<span>${this.page.width} x ${this.page.height}</span></div>
      <button type="button" class="step" aria-label="축소">${icons.minus}</button>
      <input class="zoom" type="range" min="0" max="100" value="50" aria-label="확대/축소" />
      <button type="button" class="step" aria-label="확대">${icons.plus}</button>
      <label class="percent">
        <select aria-label="배율"><option>100%</option></select>
        ${caret()}
      </label>
    </footer>`;
  }

  render() {
    return html`${this.renderHeader()} ${this.renderRibbon()}
      <nav class="documents">
        <button type="button" class="overview" aria-label="문서 목록">${icons.grid}</button>
        <div class="document">
          <span class="modified"></span><span class="name">${this.fileName}</span>
          <button type="button" aria-label="탭 닫기">${icons.tabClose}</button>
        </div>
        <div class="filler"></div>
      </nav>
      ${this.renderWorkspace()} ${this.renderStatus()}`;
  }
}
